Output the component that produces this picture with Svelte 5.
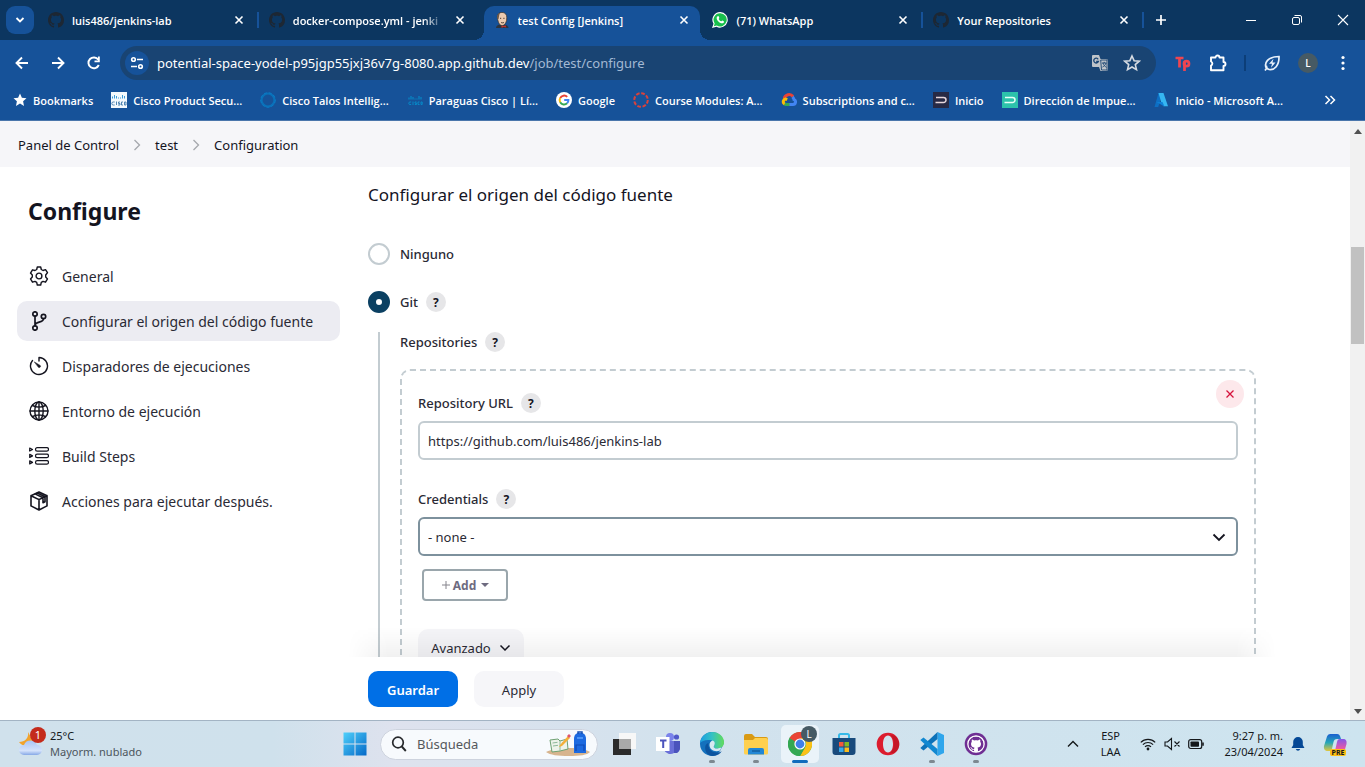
<script>
  const tabs = [
    { title: 'luis486/jenkins-lab', icon: 'github' },
    { title: 'docker-compose.yml - jenki', icon: 'github', fade: true },
    { title: 'test Config [Jenkins]', icon: 'jenkins', active: true },
    { title: '(71) WhatsApp', icon: 'whatsapp' },
    { title: 'Your Repositories', icon: 'github' }
  ];

  const bookmarks = [
    { label: 'Cisco Product Secu...', icon: 'cisco' },
    { label: 'Cisco Talos Intellig...', icon: 'talos' },
    { label: 'Paraguas Cisco | Lí...', icon: 'ciscoClear' },
    { label: 'Google', icon: 'google' },
    { label: 'Course Modules: A...', icon: 'canvas' },
    { label: 'Subscriptions and c...', icon: 'cloud' },
    { label: 'Inicio', icon: 'dDark' },
    { label: 'Dirección de Impue...', icon: 'dGreen' },
    { label: 'Inicio - Microsoft A...', icon: 'azure' }
  ];

  const sections = [
    { label: 'General', icon: 'gear' },
    { label: 'Configurar el origen del código fuente', icon: 'branch', active: true },
    { label: 'Disparadores de ejecuciones', icon: 'timer' },
    { label: 'Entorno de ejecución', icon: 'globe' },
    { label: 'Build Steps', icon: 'steps' },
    { label: 'Acciones para ejecutar después.', icon: 'cube' }
  ];

  const apps = [
    { name: 'Task view', icon: 'taskview' },
    { name: 'Teams', icon: 'teams' },
    { name: 'Edge', icon: 'edge', running: true },
    { name: 'Files', icon: 'files', running: true },
    { name: 'Chrome', icon: 'chrome', running: true, active: true },
    { name: 'Store', icon: 'store' },
    { name: 'Opera', icon: 'opera' },
    { name: 'Code', icon: 'vscode', running: true },
    { name: 'GitHub', icon: 'ghdesktop', running: true }
  ];

  let scm = $state('git');
  let repoUrl = $state('https://github.com/luis486/jenkins-lab');
  let credentials = $state('none');
</script>

{#snippet octocat()}
  <path d="M8 0C3.58 0 0 3.58 0 8c0 3.54 2.29 6.53 5.47 7.59.4.07.55-.17.55-.38 0-.19-.01-.82-.01-1.49-2.01.37-2.53-.49-2.69-.94-.09-.23-.48-.94-.82-1.13-.28-.15-.68-.52-.01-.53.63-.01 1.08.58 1.23.82.72 1.21 1.87.87 2.33.66.07-.52.28-.87.51-1.07-1.78-.2-3.64-.89-3.64-3.95 0-.87.31-1.59.82-2.15-.08-.2-.36-1.02.08-2.12 0 0 .67-.21 2.2.82.64-.18 1.32-.27 2-.27s1.36.09 2 .27c1.53-1.04 2.2-.82 2.2-.82.44 1.1.16 1.92.08 2.12.51.56.82 1.27.82 2.15 0 3.07-1.87 3.75-3.65 3.95.29.25.54.73.54 1.48 0 1.07-.01 1.93-.01 2.2 0 .21.15.46.55.38A8.01 8.01 0 0016 8c0-4.42-3.58-8-8-8z" />
{/snippet}

{#snippet favicon(name)}
  <svg class="fav" viewBox="0 0 16 16" aria-hidden="true">
    {#if name === 'github'}
      <g fill="#1d2733">{@render octocat()}</g>
    {:else if name === 'jenkins'}
      <path d="M2 16c0-2 1.500-3 3.500-3.500h5c2.500.5 4 1.500 4 3.500z" fill="#2c3440" />
      <path d="M3.500 6C3 2.500 5 .4 8 .4s5 2 4.800 5.400c0 4-1.800 7.700-4.500 7.700S4 10.500 3.500 6z" fill="#eccbb0" stroke="#3a3029" stroke-width=".7" />
      <path d="M3.400 6.500C2.600 3 4.200 1 6.500.7 5 2 5.200 4 4.600 7zM12.800 5.500l.3 2.500-1.200 1.600z" fill="#6d5848" />
      <path d="M6 6.300h1.200M9.300 6.300h1.200M7 10.400c1 .6 2 .6 3 0" stroke="#33261f" stroke-width=".9" fill="none" />
      <path d="M7.500 13.500l2 .8 2-1 .8 2.200-2.600-.5-2.200.7z" fill="#c8302d" />
    {:else if name === 'whatsapp'}
      <path d="M8.200 0A7.800 7.800 0 0 0 1.500 11.800L0 16l4.500-1.200A7.800 7.800 0 1 0 8.200 0z" fill="#fff" />
      <path d="M8.200 1.200a6.600 6.600 0 0 0-5.500 10.300l-.9 2.800 3-.8A6.600 6.600 0 1 0 8.200 1.200z" fill="#18bf4c" />
      <path d="M5.700 4.200c.5-.3.900-.1 1.100.4l.5 1.200c.1.500-.6.900-.6 1.200.5 1.100 1.400 1.900 2.500 2.300.4 0 .7-.9 1.200-.8l1.300.7c.5.300.3 1.100-.1 1.500-2.400 2-7.500-2.200-6.900-5.300.1-.5.500-1 1-1.200z" fill="#fff" />
    {:else if name === 'cisco'}
      <rect width="16" height="16" fill="#f4f9fd" />
      <path d="M1.500 4.500v2M3.500 3v3.500M5.500 4v2.500M7.500 5.500v1M9.500 5.500v1M11.500 3v3.500M13.500 4v2.500" stroke="#3c9bd6" />
      <path d="M3.700 10H2.300a1.500 1.500 0 0 0 0 3h1.400M5.500 9.500V13M9 10H7.500v1.500H9V13H7M12 10h-1.500v3H12M13.500 10h1.500v3h-1.500z" fill="none" stroke="#3f78aa" stroke-width=".9" />
    {:else if name === 'ciscoClear'}
      <g transform="translate(1 2)">
        <path d="M1 3.500v2M3 2v3.500M5 3v2.500M7 4.500v1M9 4.500v1M11 2v3.500M13 3v2.500" stroke="#0788c7" stroke-width="1.200" />
        <path d="M3.200 8H2a1 1 0 0 0 0 2.500h1.200M5 7.500v3.500M8.500 8H7v1.200h1.500v1.300H6.800M11.500 8H10v2.500h1.500M13 8h1.200v2.500H13z" fill="none" stroke="#0788c7" />
      </g>
    {:else if name === 'talos'}
      <circle cx="8" cy="8" r="6.500" fill="none" stroke="#0a71b9" stroke-width="2.200" />
      <circle cx="8" cy="8" r="7.300" fill="none" stroke="#0a80cb" stroke-width=".8" stroke-dasharray="3 2" />
    {:else if name === 'google'}
      <circle cx="8" cy="8" r="8" fill="#fff" />
      <g fill="none" stroke-width="2">
        <path d="M11.200 4.900A4.400 4.400 0 0 0 4.200 5.900" stroke="#ea4335" />
        <path d="M4.200 5.900a4.400 4.400 0 0 0 0 4.300" stroke="#fbbc05" />
        <path d="M4.200 10.200a4.400 4.400 0 0 0 6.900 1.100" stroke="#34a853" />
        <path d="M11.100 11.300A4.400 4.400 0 0 0 12.400 8H8.200" stroke="#4285f4" />
      </g>
    {:else if name === 'canvas'}
      <circle cx="8" cy="8" r="6.800" fill="none" stroke="#d8423c" stroke-width="2" stroke-dasharray="3.700 1.640" />
    {:else if name === 'cloud'}
      <path d="M3.200 6.500A5 5 0 0 1 12 4.500" fill="none" stroke="#ea4335" stroke-width="3" />
      <path d="M11.500 4.800A5 5 0 0 1 13 7.600 2.500 2.500 0 0 1 12 12.400H8" fill="none" stroke="#4285f4" stroke-width="3" />
      <path d="M8.500 12.400H4.500l-1.300-.5" fill="none" stroke="#34a853" stroke-width="3" />
      <path d="M3.600 12A2.700 2.700 0 0 1 4.600 7l1.600.7" fill="none" stroke="#fbbc05" stroke-width="3" />
    {:else if name === 'dDark' || name === 'dGreen'}
      <rect width="16" height="16" fill={name === 'dDark' ? '#272a45' : '#2cc3ab'} />
      <path d="M3 5.500h7.500a2.500 2.500 0 0 1 0 5H2.500" fill="none" stroke={name === 'dDark' ? '#e6d7dc' : '#e6fff8'} stroke-width="1.500" />
    {:else if name === 'azure'}
      <path d="M5.500 1h4.300L5.200 15H1.500z" fill="#0d6fc4" />
      <path d="M5.500 1h5L15 14.200h-4.500L8 9.500z" fill="#35b6f2" />
      <path d="M3.500 10h6l2 4.500z" fill="#0f80d8" />
    {/if}
  </svg>
{/snippet}

{#snippet sideIcon(name)}
  <svg class="side-icon" viewBox="0 0 20 20" fill="none" stroke="#14141f" stroke-width="1.400" stroke-linejoin="round" stroke-linecap="round" aria-hidden="true">
    {#if name === 'gear'}
      <path d="M8.300 1h3.400l.6 2.500 1.700 1 2.500-.8 2 3-.2.200L16.700 9v2l1.800 1.900-2 3.300-2.500-.8-1.700 1-.6 2.600H8.300l-.6-2.600-1.700-1-2.500.8-2-3.300L3.300 11V9L1.500 7.100l2-3.300 2.500.7 1.700-1z" />
      <circle cx="10" cy="10" r="2.900" />
    {:else if name === 'branch'}
      <g stroke-width="1.700">
        <circle cx="6" cy="3" r="2.200" /><circle cx="6" cy="17" r="2.200" /><circle cx="14.500" cy="5.500" r="2.200" />
        <path d="M6 5.200v9.600M14.500 7.700c0 4.300-8.500 2.600-8.500 6.600" />
      </g>
    {:else if name === 'timer'}
      <path d="M10 5V1.500a8.500 8.500 0 1 1-6.500 3" />
      <path d="M5.500 6l5.700 3.400a1.300 1.300 0 0 1-1.600 2z" fill="#14141f" stroke-width=".5" />
    {:else if name === 'globe'}
      <circle cx="10" cy="10" r="9" />
      <ellipse cx="10" cy="10" rx="4.200" ry="9" />
      <path d="M1 10h18M10 1v18M3.500 4.500c4 2 9 2 13 0M3.500 15.500c4-2 9-2 13 0" />
    {:else if name === 'steps'}
      <g stroke-width="1.200">
        <rect x="6.500" y="1.700" width="13" height="3.400" rx="1.700" />
        <rect x="6.500" y="8.200" width="13" height="3.400" rx="1.700" />
        <rect x="6.500" y="14.700" width="13" height="3.400" rx="1.700" />
        <path d="M.7 2l2.800 1.500L.7 5zM.7 8.400l2.800 1.500-2.800 1.500zM.7 14.900l2.800 1.500-2.800 1.500z" />
      </g>
    {:else if name === 'cube'}
      <path d="M10 1l8 3.700v10.200L10 19l-8-4.100V4.700zM2 4.700l8 3.900 8-3.900M10 8.600V19M6 2.900l8 3.900v5l2-1V5.700L8 1.900" stroke-width="1.600" />
    {/if}
  </svg>
{/snippet}

{#snippet appIcon(name)}
  <svg class="app-icon" viewBox="0 0 24 24" aria-hidden="true">
    {#if name === 'taskview'}
      <rect x="7" y="1" width="17" height="16" fill="#f7f7f7" /><rect x="1" y="7" width="18" height="16" fill="#2b2b2b" /><rect x="7" y="7" width="12" height="10" fill="#a9a9a9" />
    {:else if name === 'teams'}
      <circle cx="14" cy="5" r="4" fill="#7b83eb" /><circle cx="20.500" cy="5" r="2.600" fill="#5059c9" />
      <path d="M8 9h16v7a5 5 0 0 1-6 5 7 7 0 0 1-10-3z" fill="#6a70d8" /><path d="M18 9h6v7a5 5 0 0 1-6 5z" fill="#4b53bc" />
      <rect x="0" y="5" width="13.500" height="14" fill="#fff" /><path d="M4 8.500h6.500M7.200 8.500V16" stroke="#4b53bc" stroke-width="2" />
    {:else if name === 'edge'}
      <defs><linearGradient id="edge-top" x1="0" x2="1"><stop offset="0" stop-color="#1b9de2" /><stop offset=".5" stop-color="#35c1c4" /><stop offset="1" stop-color="#62dc5b" /></linearGradient></defs>
      <path d="M12 0a12 12 0 0 0-12 12 12 12 0 0 0 16 11.300L20 19l4-8A12 12 0 0 0 12 0z" fill="#1471bd" />
      <path d="M0 11A12 12 0 0 1 12 0c7 0 12 4.500 12 10.200 0 4-3 6.300-6.500 6.300-3 0-4.500-1.200-3.500-2.600 1-1.700.3-5.400-4-5.900C5.300 7.500 1.300 9 0 11z" fill="url(#edge-top)" />
      <path d="M8.500 11c-1 5 2.500 9.500 8 9.500 2.200 0 4-.4 5.300-1.500-1.500 2.800-4.500 5-9 5C7.500 24 5 19.500 5.200 15.500c0-2.500 1.500-4 3.300-4.500z" fill="#0c549f" />
      <path d="M12.500 8.500c3 1 2.500 4 1.500 5.400-1 1.400 1 2.600 3.500 2.600l4-1-1.500 3c-5 2-10.500-.5-10.500-5.500 0-2 1-4 3-4.500z" fill="#d8e9f1" />
    {:else if name === 'files'}
      <path d="M0 4a2 2 0 0 1 2-2h6l3 3h11a2 2 0 0 1 2 2v12H0z" fill="#d99a14" /><path d="M0 8h9l2-2h11a2 2 0 0 1 2 2v13a1.500 1.500 0 0 1-1.500 1.500h-21A1.500 1.500 0 0 1 0 21z" fill="#ffd04e" />
      <path d="M4 22.500V18a2 2 0 0 1 2-2h12a2 2 0 0 1 2 2v4.500z" fill="#2287d5" /><path d="M8 19h8" stroke="#135f9f" stroke-width="1.500" />
    {:else if name === 'chrome'}
      <circle cx="12" cy="12" r="12" fill="#34a853" />
      <path d="M1.600 6A12 12 0 0 1 22.400 6H12a6 6 0 0 0-5.200 3z" fill="#ea4335" /><path d="M1.600 6l5.200 3L7 15l10-9z" fill="#ea4335" />
      <path d="M22.400 6A12 12 0 0 1 12 24l5.200-9a6 6 0 0 0 0-6L12 6z" fill="#fbc116" />
      <path d="M1.600 6A12 12 0 0 0 12 24l5.200-9H6.800z" fill="#34a853" />
      <circle cx="12" cy="12" r="5.600" fill="#fff" /><circle cx="12" cy="12" r="4.400" fill="#3f80ea" />
    {:else if name === 'store'}
      <path d="M7 6V3.500A1.500 1.500 0 0 1 8.500 2h7A1.500 1.500 0 0 1 17 3.500V6" fill="none" stroke="#35b9e8" stroke-width="2" />
      <path d="M.5 6h23v14a3 3 0 0 1-3 3h-17a3 3 0 0 1-3-3z" fill="#184a7c" />
      <rect x="7" y="10" width="4.500" height="4.500" fill="#f1583a" /><rect x="12.500" y="10" width="4.500" height="4.500" fill="#80ba24" /><rect x="7" y="15.500" width="4.500" height="4.500" fill="#36a8ea" /><rect x="12.500" y="15.500" width="4.500" height="4.500" fill="#fbbc1c" />
    {:else if name === 'opera'}
      <path fill-rule="evenodd" d="M12 .7a11.300 11.300 0 1 0 0 22.600A11.300 11.300 0 0 0 12 .7zM12 3.500c3.200 0 5 3.800 5 8.500s-1.800 8.500-5 8.500S7 16.700 7 12s1.800-8.500 5-8.500z" fill="#dc1c2e" />
      <path d="M14 3.500c5 1 5.500 15 0 17 6 2 9.500-3.500 9.300-8.500S19 2 14 3.500z" fill="#a90f1c" opacity=".45" />
    {:else if name === 'vscode'}
      <path d="M17.500 0L24 3v18l-6.500 3z" fill="#2fa6ec" /><path d="M17.500 0v7L3.500 18.500.3 16z" fill="#0d72b9" /><path d="M3.500 5.500L17.500 17v7L.3 8z" fill="#1188d1" />
    {:else if name === 'ghdesktop'}
      <circle cx="12" cy="12" r="11.300" fill="#6f2e93" /><circle cx="12" cy="12" r="8" fill="#fff" /><g fill="#6f2e93" transform="translate(4.200 4.400) scale(.975)">{@render octocat()}</g><circle cx="12" cy="12" r="8.200" fill="none" stroke="#fff" stroke-width="1.200" />
    {/if}
  </svg>
{/snippet}

{#snippet help(topic)}
  <button class="help" type="button" aria-label={topic}>?</button>
{/snippet}

<div class="desktop">
  <header class="browser">
    <div class="tab-strip">
      <button class="tab-search" aria-label="Tabs"><svg viewBox="0 0 12 12" class="s12"><path d="M2.500 4L6 7.500 9.500 4" fill="none" stroke="#fff" stroke-width="1.800" /></svg></button>
      <div class="tabs">
        {#each tabs as tab}
          <div class="tab" class:active={tab.active}>
            {@render favicon(tab.icon)}
            <span class="tab-title" class:fade={tab.fade}>{tab.title}</span>
            <button class="plain" aria-label="Close tab"><svg viewBox="0 0 12 12" class="s12"><path d="M2.500 2.500l7 7M9.500 2.500l-7 7" stroke="#fff" stroke-width="1.600" /></svg></button>
          </div>
        {/each}
      </div>
      <button class="plain new-tab" aria-label="New tab"><svg viewBox="0 0 12 12" class="s12"><path d="M6 1v10M1 6h10" stroke="#fff" stroke-width="1.700" /></svg></button>
      <div class="window-controls">
        <button class="plain" aria-label="Minimize"><svg viewBox="0 0 12 12" class="s12"><path d="M1 6.500h10" stroke="#fff" /></svg></button>
        <button class="plain" aria-label="Restore"><svg viewBox="0 0 12 12" class="s12"><rect x="1.500" y="3.500" width="7" height="7" rx="1.500" fill="none" stroke="#fff" /><path d="M3.500 1.500H9A1.500 1.500 0 0 1 10.500 3v5.500" fill="none" stroke="#fff" /></svg></button>
        <button class="plain" aria-label="Close"><svg viewBox="0 0 12 12" class="s12"><path d="M1 1l10 10M11 1L1 11" stroke="#fff" stroke-width="1.100" /></svg></button>
      </div>
    </div>

    <div class="toolbar">
      <div class="nav-buttons">
        <button class="plain" aria-label="Back"><svg viewBox="0 0 16 16" class="s16"><path d="M14 8H3M8 2.500L2.500 8 8 13.500" fill="none" stroke="#fff" stroke-width="1.900" /></svg></button>
        <button class="plain" aria-label="Forward"><svg viewBox="0 0 16 16" class="s16"><path d="M2 8h11M8 2.500L13.500 8 8 13.500" fill="none" stroke="#fff" stroke-width="1.900" /></svg></button>
        <button class="plain" aria-label="Reload"><svg viewBox="0 0 16 16" class="s16"><path d="M12.800 10A5.400 5.400 0 1 1 12.300 4.800" fill="none" stroke="#fff" stroke-width="1.900" /><path d="M13.800 1.500v5.700H8.500V5.500H12v-4z" fill="#fff" /></svg></button>
      </div>
      <div class="address">
        <button class="site-info" aria-label="Site information"><svg viewBox="0 0 14 14" class="s14"><g fill="none" stroke="#fff" stroke-width="1.600"><circle cx="3.500" cy="3.500" r="1.800" /><path d="M7 3.500h6M1 10.500h6" /><circle cx="10.500" cy="10.500" r="1.800" /></g></svg></button>
        <span class="url">potential-space-yodel-p95jgp55jxj36v7g-8080.app.github.dev<span class="path">/job/test/configure</span></span>
        <button class="plain" aria-label="Translate"><svg viewBox="0 0 18 18" class="s18"><path d="M2 1h6l1.500 4H15a2 2 0 0 1 2 2v8a2 2 0 0 1-2 2H9.500L8 13H2a1 1 0 0 1-1-1V2a1 1 0 0 1 1-1z" fill="#bfc4c9" /><path d="M7.200 5.300A2.400 2.400 0 1 0 7.400 7.500H5.200" fill="none" stroke="#194473" stroke-width="1.300" /><path d="M9.700 6H16v10h-5.500zM11 9h4.500M13.200 7.800V9M12 9c.5 2 2 3.500 3.500 4.500M15 9c-.5 2-2 3.500-3.500 4" fill="none" stroke="#194473" stroke-width=".9" /></svg></button>
        <button class="plain" aria-label="Bookmark"><svg viewBox="0 0 18 18" class="s18"><path d="M9 2l2.100 4.700 5.100.5-3.900 3.400 1.200 5L9 13l-4.500 2.600 1.200-5L1.800 7.200l5.100-.5z" fill="none" stroke="#d5dbe2" stroke-width="1.600" /></svg></button>
      </div>
      <div class="extensions">
        <button class="plain" aria-label="Extension"><svg viewBox="0 0 18 18" class="s18"><g fill="none" stroke="#ee4550" stroke-width="2.700"><path d="M1.500 4h8M5.500 4v9.500M10.500 17V7.500" /><circle cx="12.500" cy="9.700" r="2.500" /></g></svg></button>
        <button class="plain" aria-label="Extensions"><svg viewBox="0 0 18 18" class="s18"><path d="M2 3.500h4.500a2 2 0 0 1 4 0h4V8a2 2 0 0 1 0 4v4.200H2v-4.500a2.300 2.300 0 0 0 0-4.200z" fill="none" stroke="#fff" stroke-width="1.900" stroke-linejoin="round" /></svg></button>
        <span class="divider"></span>
        <button class="plain" aria-label="Energy saver"><svg viewBox="0 0 18 18" class="s18"><path d="M3.500 14.500C.5 9 5 2.500 16 2.500c.3 9-4.500 14-10 13-2-.4-2.800-2-2.500-4M3.500 14.500l-1.500 2" fill="none" stroke="#e8f1fb" stroke-width="1.700" /><path d="M10.500 4.800L6 9.800h3l-1 4 4.500-5.300h-3z" fill="#e8f1fb" /></svg></button>
        <button class="avatar" aria-label="Profile L">L</button>
        <button class="plain" aria-label="Menu"><svg viewBox="0 0 16 16" class="s16"><g fill="#fff"><circle cx="8" cy="2.500" r="1.600" /><circle cx="8" cy="8" r="1.600" /><circle cx="8" cy="13.500" r="1.600" /></g></svg></button>
      </div>
    </div>

    <nav class="bookmarks" aria-label="Bookmarks">
      <a class="bookmark" href="#bookmarks"><svg viewBox="0 0 14 14" class="s14"><path d="M7 .5l1.900 4.200 4.600.5-3.400 3.100.9 4.600L7 10.600l-4 2.300.9-4.600L.5 5.200l4.600-.5z" fill="#fff" /></svg><span>Bookmarks</span></a>
      {#each bookmarks as item}
        <a class="bookmark" href="#bookmark">{@render favicon(item.icon)}<span>{item.label}</span></a>
      {/each}
      <button class="plain more" aria-label="More bookmarks"><svg viewBox="0 0 12 12" class="s12"><path d="M1.500 2L5.500 6l-4 4M6.500 2l4 4-4 4" fill="none" stroke="#fff" stroke-width="1.500" /></svg></button>
    </nav>
  </header>

  <div class="viewport">
    <div class="page">
      <nav class="breadcrumbs" aria-label="Breadcrumbs">
        <a href="#panel">Panel de Control</a>
        <svg viewBox="0 0 12 12" class="s12"><path d="M3.500 1l5 5-5 5" fill="none" stroke="#a5a8ad" stroke-width="1.300" /></svg>
        <a href="#test">test</a>
        <svg viewBox="0 0 12 12" class="s12"><path d="M3.500 1l5 5-5 5" fill="none" stroke="#a5a8ad" stroke-width="1.300" /></svg>
        <a href="#configuration">Configuration</a>
      </nav>

      <div class="columns">
        <aside class="sidebar">
          <h1>Configure</h1>
          <nav class="sections" aria-label="Sections">
            {#each sections as item}
              <a class="section" class:active={item.active} href="#section">{@render sideIcon(item.icon)}<span>{item.label}</span></a>
            {/each}
          </nav>
        </aside>

        <form class="config" onsubmit={(e) => e.preventDefault()}>
          <div class="fields">
            <h2>Configurar el origen del código fuente</h2>
            <label class="radio-row"><input type="radio" name="scm" value="none" bind:group={scm} /><span>Ninguno</span></label>
            <div class="radio-row git">
              <input id="scm-git" type="radio" name="scm" value="git" bind:group={scm} /><label for="scm-git">Git</label>{@render help('Git')}
            </div>
            <div class="nested">
              <div class="caption"><span>Repositories</span>{@render help('Repositories')}</div>
              <div class="repo">
                <button class="remove" type="button" aria-label="Remove"><svg viewBox="0 0 10 10"><path d="M1.500 1.500l7 7M8.500 1.500l-7 7" stroke="#d5123c" stroke-width="1.300" /></svg></button>
                <div class="caption"><label for="repo-url">Repository URL</label>{@render help('Repository URL')}</div>
                <input id="repo-url" class="control" type="text" bind:value={repoUrl} />
                <div class="caption second"><label for="credentials">Credentials</label>{@render help('Credentials')}</div>
                <div class="select-wrap">
                  <select id="credentials" class="control" bind:value={credentials}><option value="none">- none -</option></select>
                  <svg viewBox="0 0 14 14" class="s14"><path d="M1.500 4.500L7 10l5.500-5.500" fill="none" stroke="#14141f" stroke-width="1.800" /></svg>
                </div>
                <button class="add" type="button"><svg viewBox="0 0 10 10"><path d="M5 1v8M1 5h8" stroke="#85848c" /></svg>Add<span class="caret"></span></button>
                <button class="advanced" type="button">Avanzado<svg viewBox="0 0 12 12" class="s12"><path d="M1.500 3.500L6 8l4.500-4.500" fill="none" stroke="#14141f" stroke-width="1.500" /></svg></button>
              </div>
            </div>
          </div>
          <div class="actions">
            <button class="save" type="submit">Guardar</button>
            <button class="apply" type="button">Apply</button>
          </div>
        </form>
      </div>
    </div>
    <div class="scrollbar" aria-hidden="true">
      <span class="arrow up"></span>
      <span class="track"><span class="thumb"></span></span>
      <span class="arrow down"></span>
    </div>
  </div>

  <footer class="taskbar">
    <button class="weather">
      <svg viewBox="0 0 28 30" aria-hidden="true">
        <defs><linearGradient id="cloud" x2="0" y2="1"><stop offset="0" stop-color="#a9c4f5" /><stop offset=".7" stop-color="#d4e2fb" /><stop offset="1" stop-color="#86a8e6" /></linearGradient></defs>
        <path d="M10 5c1 6-3 10-9 10 3 5 12 5 14-1z" fill="#f2a32c" />
        <path d="M6 28a5 5 0 0 1 0-10 7 7 0 0 1 13 0 5 5 0 0 1 0 10z" fill="url(#cloud)" />
        <circle cx="20" cy="8" r="8" fill="#c42b1c" />
        <text x="20" y="12" text-anchor="middle" fill="#fff" font-size="11">1</text>
      </svg>
      <span class="lines"><span>25°C</span><span class="muted">Mayorm. nublado</span></span>
    </button>
    <div class="launcher">
      <button class="start" aria-label="Start"><svg viewBox="0 0 24 24" class="app-icon"><defs><linearGradient id="win" x2="1" y2="1"><stop offset="0" stop-color="#4fd0fb" /><stop offset="1" stop-color="#0469c8" /></linearGradient></defs><path d="M.5.5h11v11H.5zM12.500.5h11v11h-11zM.5 12.500h11v11H.5zM12.500 12.500h11v11h-11z" fill="url(#win)" /></svg></button>
      <div class="search">
        <svg viewBox="0 0 16 16" class="s16"><circle cx="7" cy="6.500" r="5.300" fill="none" stroke="#26282b" stroke-width="1.700" /><path d="M10.800 10.500l4 4.500" stroke="#26282b" stroke-width="1.900" /></svg>
        <input type="text" aria-label="Búsqueda" placeholder="Búsqueda" />
        <svg class="doodle" viewBox="0 0 46 26" aria-hidden="true">
          <path d="M1 21c4-2 12-4 23-4s18 2 21 4c-3 3-10 4-21 4S5 24 1 21z" fill="#d7b48e" />
          <path d="M5 9l8-1 2 2 7-2 1 10-8 2-8 1z" fill="#eef3ea" stroke="#6ea172" /><path d="M15 10v10M7.500 12l5-.7M8 15l5-.7M17 12l3-.8" stroke="#8fb99a" />
          <path d="M15 14l8-9 2 2-8 8-3 1z" fill="#f4af38" /><path d="M22 5l2-2 2 2-2 2z" fill="#e0556a" />
          <path d="M29 22V8c0-4 2-6 5-6h2c3 0 5 2 5 6v14z" fill="#1c6ae0" /><path d="M33 3V1h4v2" fill="none" stroke="#1550b5" stroke-width="1.500" /><path d="M31 20v-6h8v6" fill="none" stroke="#0f4ab5" stroke-width="1.200" /><path d="M32 7h6" stroke="#5da4ff" stroke-width="1.500" />
        </svg>
      </div>
      {#each apps as app}
        <button class="app" class:active={app.active} class:running={app.running} aria-label={app.name}>
          {@render appIcon(app.icon)}
          {#if app.active}<span class="profile">L</span>{/if}
        </button>
      {/each}
    </div>
    <div class="tray">
      <button class="plain" aria-label="Hidden icons"><svg viewBox="0 0 12 12" class="s12"><path d="M1 8.500L6 3.500l5 5" fill="none" stroke="#15181b" stroke-width="1.400" /></svg></button>
      <span class="lines lang"><span>ESP</span><span>LAA</span></span>
      <span class="status">
        <svg viewBox="0 0 16 16" class="s16"><g fill="none" stroke="#15181b" stroke-width="1.200"><path d="M.8 6.300a10.200 10.200 0 0 1 14.400 0M2.900 8.600a7.200 7.200 0 0 1 10.200 0M5 10.900a4.200 4.200 0 0 1 6 0" /></g><circle cx="8" cy="13" r="1.400" fill="#15181b" /></svg>
        <svg viewBox="0 0 16 16" class="s16"><path d="M1 6h2.500L7.500 2.500v11L3.500 10H1zM10.500 5.500l5 5M15.500 5.500l-5 5" fill="none" stroke="#15181b" stroke-width="1.100" /></svg>
        <svg viewBox="0 0 16 16" class="s16"><rect x=".7" y="3.700" width="13" height="8.800" rx="2" fill="none" stroke="#15181b" stroke-width="1.200" /><rect x="2.500" y="5.500" width="8.500" height="5.200" rx=".8" fill="#15181b" /><path d="M15 6.500v3.200" stroke="#15181b" stroke-width="1.600" /></svg>
      </span>
      <span class="lines clock"><span>9:27 p. m.</span><span>23/04/2024</span></span>
      <svg viewBox="0 0 16 16" class="s16"><path d="M8 1a4.800 4.800 0 0 0-4.800 4.800V9l-1.700 3h13l-1.700-3V5.800A4.800 4.800 0 0 0 8 1zM5.800 13a2.300 2.300 0 0 0 4.400 0z" fill="#044896" /></svg>
      <button class="copilot" aria-label="Copilot">
        <svg viewBox="0 0 24 24"><defs><linearGradient id="cpa" x2="0" y2="1"><stop offset="0" stop-color="#1b5fd0" /><stop offset=".5" stop-color="#25a6b8" /><stop offset="1" stop-color="#e2c63c" /></linearGradient><linearGradient id="cpb" x2="0" y2="1"><stop offset="0" stop-color="#8458e8" /><stop offset=".6" stop-color="#e65aa8" /><stop offset="1" stop-color="#f49b54" /></linearGradient></defs><path d="M7 1h7a3 3 0 0 1 3 2l1 3h-4c-2 0-3 1-3.500 3L8.500 18H5c-3 0-4.500-2-4-5L4 3.500A3.500 3.500 0 0 1 7 1z" fill="url(#cpa)" /><path d="M17 6h3c3 0 4 2 3.500 5l-2 7c-.6 2-2 3.500-4.500 3.500H9l3-3.500 2-9c.5-2 1-3 3-3z" fill="url(#cpb)" /></svg>
        <span>PRE</span>
      </button>
    </div>
  </footer>
</div>

<style>
  :global(body) { margin: 0; }
  .desktop { height: 100vh; display: flex; flex-direction: column; overflow: hidden; background: #fff; color: #14141f; font-family: "Noto Sans", "Open Sans", sans-serif; font-size: 13px; }
  .desktop * { box-sizing: border-box; }
  button, input, select { font: inherit; color: inherit; }
  button { border: 0; padding: 0; background: none; display: flex; align-items: center; justify-content: center; flex: none; }
  a { color: inherit; text-decoration: none; }
  svg { display: block; flex: none; }
  .s12 { width: 12px; height: 12px; }
  .s14 { width: 14px; height: 14px; }
  .s16, .fav { width: 16px; height: 16px; }
  .s18 { width: 18px; height: 18px; }

  .browser { flex: none; background: #165299; color: #fff; font-family: "Open Sans", "Noto Sans", sans-serif; font-weight: 600; font-size: 11px; border-bottom: 1px solid #4a76ac; }
  .tab-strip { height: 40px; display: flex; align-items: center; background: #0c3660; padding-left: 6px; }
  .tab-search { width: 28px; height: 28px; border-radius: 9px; background: #165299; margin-right: 4px; }
  .tabs { display: flex; flex: 0 1 1106px; min-width: 0; align-self: stretch; align-items: center; }
  .tab { flex: 1; min-width: 0; display: flex; align-items: center; gap: 8px; height: 16px; padding: 0 12px 0 10px; border-right: 2px solid #165299; }
  .tab:has(+ .active) { border-color: transparent; }
  .tab.active { height: 34px; align-self: flex-end; border-radius: 10px 10px 0 0; background: #165299; margin: 0 2px 0 4px; border-right: 0; padding-bottom: 6px; padding-right: 10px; position: relative; }
  .tab.active::before, .tab.active::after { content: ""; position: absolute; bottom: 0; width: 10px; height: 10px; }
  .tab.active::before { right: 100%; background: radial-gradient(circle at 0 0, transparent 10px, #165299 10px); }
  .tab.active::after { left: 100%; background: radial-gradient(circle at 100% 0, transparent 10px, #165299 10px); }
  .tab-title { flex: 1; min-width: 0; overflow: hidden; white-space: nowrap; }
  .tab-title.fade { mask-image: linear-gradient(90deg, #000 85%, transparent); }
  .new-tab { margin-left: 11px; }
  .window-controls { margin-left: auto; display: flex; gap: 34px; padding-right: 16px; }

  .toolbar { height: 46px; display: flex; align-items: center; gap: 18px; padding: 0 14px; }
  .nav-buttons { display: flex; gap: 20px; }
  .address { flex: 1; min-width: 0; height: 34px; border-radius: 17px; background: #194473; display: flex; align-items: center; gap: 14px; padding: 0 15px 0 5px; }
  .site-info { width: 24px; height: 24px; border-radius: 50%; background: #165299; }
  .url { flex: 1; min-width: 0; overflow: hidden; white-space: nowrap; font-family: "Noto Sans", sans-serif; font-weight: 400; font-size: 13px; margin-left: -6px; }
  .path { color: #a3b9d3; }
  .extensions { display: flex; align-items: center; gap: 17px; }
  .divider { width: 2px; height: 16px; background: #0c3e78; }
  .avatar { width: 20px; height: 20px; border-radius: 50%; background: #465a64; font-size: 10px; }

  .bookmarks { height: 34px; display: flex; align-items: center; gap: 18px; padding: 0 29px 0 13px; margin-top: -3px; margin-bottom: 3px; }
  .bookmark { display: flex; align-items: center; gap: 6px; white-space: nowrap; }
  .more { margin-left: auto; }

  .viewport { flex: 1; min-height: 0; display: flex; }
  .page { flex: 1; min-width: 0; display: flex; flex-direction: column; }
  .breadcrumbs { flex: none; height: 46px; display: flex; align-items: center; gap: 12px; padding: 2px 18px 0; background: #f6f6f9; }
  .columns { flex: 1; min-height: 0; display: flex; }
  .sidebar { width: 368px; flex: none; padding: 28px 28px 0 17px; }
  h1 { margin: 0 0 29px 11px; font-size: 23px; line-height: 32px; font-weight: 700; }
  .sections { display: flex; flex-direction: column; gap: 5px; }
  .section { display: flex; align-items: center; gap: 13px; height: 40px; padding: 0 12px; border-radius: 10px; font-size: 14px; color: #2a2a35; }
  .section.active { background: #ececf2; }
  .side-icon { width: 20px; height: 20px; }

  .config { flex: 1; min-width: 0; max-width: 888px; margin-right: 20px; display: flex; flex-direction: column; color: #2a2a35; }
  .fields { flex: 1; min-height: 0; overflow: hidden; }
  h2 { margin: 14px 0 34px; font-size: 17px; line-height: 28px; font-weight: 400; color: #14141f; }
  .radio-row { display: flex; align-items: center; gap: 10px; height: 22px; margin-bottom: 26px; font-weight: 500; }
  .radio-row.git { margin-bottom: 19px; }
  .git .help { margin-left: -2px; }
  input[type="radio"] { appearance: none; width: 22px; height: 22px; margin: 0; border-radius: 50%; border: 2px solid #c3ccd1; background: #fff; }
  input[type="radio"]:checked { border: 8px solid #0b4062; }
  .help { width: 20px; height: 20px; border-radius: 50%; background: #e6e6e8; font-weight: 700; font-size: 12px; color: #14141f; }
  .nested { margin-left: 10px; border-left: 2px solid #c3ccd1; padding-left: 20px; }
  .caption { display: flex; align-items: center; gap: 8px; height: 20px; font-weight: 500; }
  .repo { position: relative; margin-top: 17px; border: 2px dashed #c3ccd1; border-radius: 10px; padding: 22px 16px 16px; height: 420px; }
  .remove { position: absolute; top: 9px; right: 10px; width: 28px; height: 28px; border-radius: 50%; background: #fde8eb; }
  .remove svg { width: 10px; height: 10px; }
  .control { display: block; width: 100%; height: 39px; margin-top: 8px; padding: 0 8px; border: 2px solid #c3ccd1; border-radius: 6px; background: #fff; outline: 0; }
  .caption.second { margin-top: 29px; }
  .select-wrap { display: grid; align-items: center; }
  .select-wrap > * { grid-area: 1 / 1; }
  .select-wrap svg { justify-self: end; margin: 8px 12px 0 0; pointer-events: none; }
  select.control { appearance: none; border-color: #7d919d; }
  .add { width: 86px; height: 32px; margin: 13px 0 28px 4px; border: 2px solid #9aa6ac; border-radius: 4px; background: #fff; color: #6e6b80; font-size: 12px; font-weight: 700; gap: 2px; }
  .add svg { width: 10px; height: 10px; }
  .caret { border: 4px solid transparent; border-top-color: #6e6b80; border-bottom: 0; margin-left: 3px; }
  .advanced { width: 106px; height: 38px; border-radius: 10px; background: #f5f5f8; gap: 8px; }
  .actions { flex: none; height: 63px; position: relative; display: flex; gap: 16px; padding-top: 14px; background: #fff; }
  .actions::before { content: ""; position: absolute; bottom: 100%; left: -20px; right: -20px; height: 30px; background: linear-gradient(transparent, rgba(0, 0, 0, 0.055)); mask-image: linear-gradient(90deg, transparent, #000 40px calc(100% - 40px), transparent); pointer-events: none; }
  .actions button { width: 90px; height: 36px; border-radius: 10px; padding-top: 2px; }
  .save { background: #006fe6; color: #fff; font-weight: 600; }
  .apply { background: #f6f6f9; }

  .scrollbar { width: 15px; flex: none; display: flex; flex-direction: column; align-items: center; background: #f1f1f1; padding: 8px 0 6px; }
  .arrow { border: 4px solid transparent; }
  .up { border-bottom: 5px solid #505050; border-top: 0; }
  .down { border-top: 5px solid #505050; border-bottom: 0; }
  .track { flex: 1; width: 13px; padding-top: 113px; }
  .thumb { display: block; height: 97px; background: #c1c1c1; }

  .taskbar { flex: none; height: 47px; display: flex; align-items: center; justify-content: space-between; border-top: 1px solid #a3b4c4; background: linear-gradient(90deg, #d0e1ec, #cfe1ec 20%, #dee2ee 29%, #d2e2ed 50%, #cde4ef); font-size: 11px; color: #15181b; }
  .weather { width: 333px; justify-content: flex-start; gap: 4px; padding-left: 18px; text-align: left; }
  .weather svg { width: 28px; height: 30px; margin-bottom: 5px; }
  .lines { display: flex; flex-direction: column; line-height: 16px; white-space: nowrap; }
  .muted { color: #4c555c; }
  .launcher { flex: none; display: flex; align-items: center; }
  .start, .app { width: 44px; height: 40px; }
  .app-icon { width: 24px; height: 24px; }
  .search { width: 218px; height: 31px; margin: 0 4px 0 3px; padding: 0 6px 0 10px; border-radius: 16px; border: 1px solid #cdd3de; background: #f7fafd; display: flex; align-items: center; gap: 10px; }
  .search input { flex: 1; min-width: 0; border: 0; background: none; outline: 0; padding: 0; font-size: 13px; }
  .search input::placeholder { color: #55585c; opacity: 1; }
  .doodle { width: 46px; height: 26px; }
  .app { position: relative; }
  .app.active::before { content: ""; position: absolute; inset: 1px 3px; border-radius: 5px; background: #eaf3f9; }
  .app.active .app-icon { position: relative; }
  .app.running::after { content: ""; position: absolute; bottom: 1px; left: 19px; width: 6px; height: 3px; border-radius: 2px; background: #7d8890; }
  .app.active::after { left: 14px; width: 16px; background: #0f6cbd; }
  .profile { position: absolute; top: 2px; right: 5px; width: 16px; height: 16px; border-radius: 50%; background: #465a64; color: #fff; font-size: 10px; line-height: 16px; }
  .tray { margin-left: auto; display: flex; align-items: center; padding-right: 18px; }
  .lang { margin: 0 20px 0 22px; text-align: center; }
  .status { display: flex; gap: 8px; margin-right: 20px; }
  .clock { text-align: right; margin-right: 7px; }
  .copilot { flex-direction: column; margin-left: 17px; }
  .copilot svg { width: 24px; height: 24px; }
  .copilot span { background: #fdbe14; border-radius: 2px; font-size: 7px; line-height: 7px; font-weight: 700; padding: 0 2px; margin: -8px 0 0 6px; position: relative; }
</style>
